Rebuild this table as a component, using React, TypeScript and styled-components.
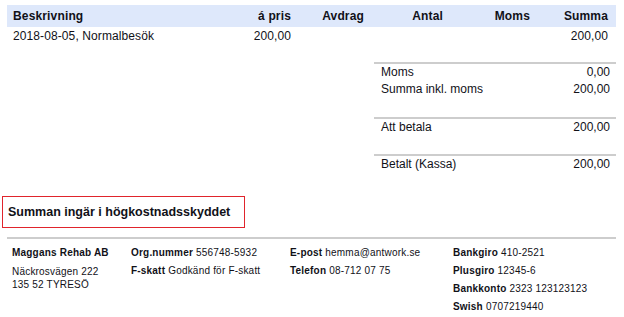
import React from "react";
import styled, { createGlobalStyle } from "styled-components";

const GlobalStyle = createGlobalStyle`
  html, body {
    margin: 0;
    padding: 0;
    background: #ffffff;
  }
  body {
    font-family: "Liberation Sans", Arial, sans-serif;
    color: #111118;
  }
`;

const Page = styled.div`
  width: 624px;
  height: 317px;
  overflow: hidden;
  padding-top: 5px;
  box-sizing: border-box;
`;

const Table = styled.div`
  margin: 0 8px 0 7px;
  display: grid;
  grid-template-columns: 212px 80px 73px 79px 87px 78px;
`;

const HeadCell = styled.div<{ $align?: "left" | "right" }>`
  background: #dee8fb;
  height: 22px;
  line-height: 22px;
  font-size: 12px;
  font-weight: bold;
  letter-spacing: 0.15px;
  padding: 0 8px 0 6px;
  text-align: ${(p) => p.$align ?? "right"};
  white-space: nowrap;
`;

const Cell = styled.div<{ $align?: "left" | "right" }>`
  height: 18px;
  line-height: 18px;
  font-size: 12px;
  letter-spacing: 0.1px;
  padding: 0 8px 0 6px;
  text-align: ${(p) => p.$align ?? "right"};
  white-space: nowrap;
`;

const Totals = styled.div`
  margin: 17px 8px 0 374px;
  width: 242px;
`;

const TotalGroup = styled.div<{ $gap: number }>`
  border-top: 2px solid #cdcdcd;
  margin-bottom: ${(p) => p.$gap}px;
`;

const TotalRow = styled.div`
  display: flex;
  justify-content: space-between;
  height: 17px;
  line-height: 17px;
  font-size: 12px;
  padding: 0 6px 0 7px;
`;

const Notice = styled.div`
  margin: 23px 0 0 2px;
  width: 243px;
  height: 32px;
  box-sizing: border-box;
  border: 1px solid #e0242c;
  display: flex;
  align-items: center;
  padding: 0 5px;
  font-size: 12.5px;
  font-weight: bold;
  white-space: nowrap;
`;

const Footer = styled.div`
  margin: 9px 8px 0 7px;
  border-top: 2px solid #cdcdcd;
  padding: 5px 0 0 5px;
  display: grid;
  grid-template-columns: 119px 159px 163px 1fr;
  font-size: 10px;
  letter-spacing: 0.2px;
`;

const FooterCol = styled.div`
  display: flex;
  flex-direction: column;
`;

const FooterLine = styled.div`
  height: 18px;
  line-height: 18px;
  white-space: nowrap;
  b {
    font-weight: bold;
  }
`;

const Address = styled.div`
  margin-top: 3px;
  line-height: 13px;
`;

type Column = { title: string; align?: "left" | "right" };

const columns: Column[] = [
  { title: "Beskrivning", align: "left" },
  { title: "á pris" },
  { title: "Avdrag" },
  { title: "Antal" },
  { title: "Moms" },
  { title: "Summa" },
];

const rows = [["2018-08-05, Normalbesök", "200,00", "", "", "", "200,00"]];

const totals: { gap: number; items: [string, string][] }[] = [
  {
    gap: 19,
    items: [
      ["Moms", "0,00"],
      ["Summa inkl. moms", "200,00"],
    ],
  },
  { gap: 18, items: [["Att betala", "200,00"]] },
  { gap: 0, items: [["Betalt (Kassa)", "200,00"]] },
];

const Field = ({ label, value }: { label: string; value: string }) => (
  <FooterLine>
    <b>{label}</b> {value}
  </FooterLine>
);

export default function App() {
  return (
    <>
      <GlobalStyle />
      <Page>
        <Table>
          {columns.map((c) => (
            <HeadCell key={c.title} $align={c.align}>
              {c.title}
            </HeadCell>
          ))}
          {rows.map((r, i) =>
            r.map((v, j) => (
              <Cell key={`${i}-${j}`} $align={columns[j].align}>
                {v}
              </Cell>
            ))
          )}
        </Table>

        <Totals>
          {totals.map((g, i) => (
            <TotalGroup key={i} $gap={g.gap}>
              {g.items.map(([label, value]) => (
                <TotalRow key={label}>
                  <span>{label}</span>
                  <span>{value}</span>
                </TotalRow>
              ))}
            </TotalGroup>
          ))}
        </Totals>

        <Notice>Summan ingär i högkostnadsskyddet</Notice>

        <Footer>
          <FooterCol>
            <FooterLine>
              <b>Maggans Rehab AB</b>
            </FooterLine>
            <Address>
              Näckrosvägen 222
              <br />
              135 52 TYRESÖ
            </Address>
          </FooterCol>
          <FooterCol>
            <Field label="Org.nummer" value="556748-5932" />
            <Field label="F-skatt" value="Godkänd för F-skatt" />
          </FooterCol>
          <FooterCol>
            <Field label="E-post" value="hemma@antwork.se" />
            <Field label="Telefon" value="08-712 07 75" />
          </FooterCol>
          <FooterCol>
            <Field label="Bankgiro" value="410-2521" />
            <Field label="Plusgiro" value="12345-6" />
            <Field label="Bankkonto" value="2323 123123123" />
            <Field label="Swish" value="0707219440" />
          </FooterCol>
        </Footer>
      </Page>
    </>
  );
}
